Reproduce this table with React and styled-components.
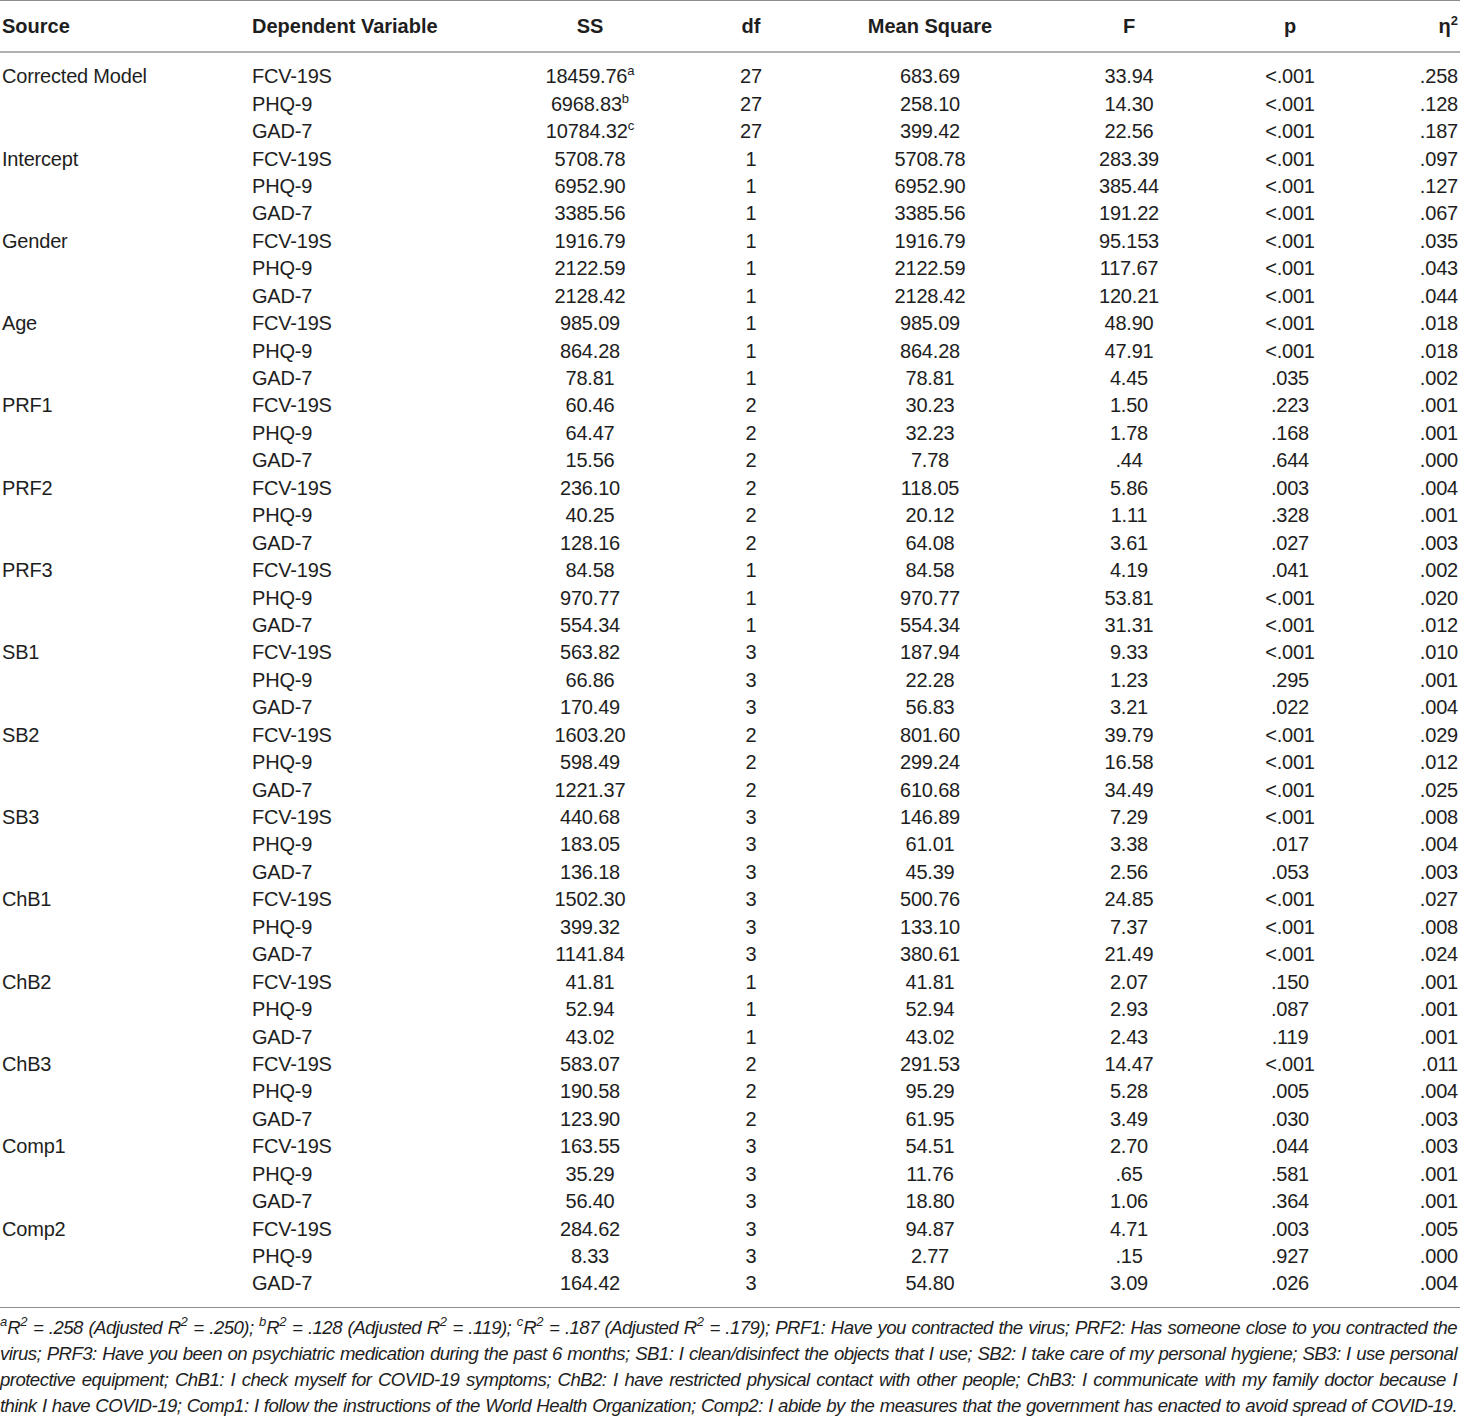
import React from 'react';
import styled, { createGlobalStyle } from 'styled-components';

const GlobalStyle = createGlobalStyle`
  html, body {
    margin: 0;
    padding: 0;
    background: #ffffff;
  }
  body {
    font-family: "Liberation Sans", Arial, sans-serif;
    color: #1e1e1e;
  }
`;

const COLUMNS = '250px 250px 180px 142px 216px 182px 140px 100px';

// Outer wrapper for the whole table
const TableWrap = styled.section`
  width: 1460px;
  border-top: 1px solid #8c8c8c;
`;

// Header row
const HeaderRow = styled.div`
  display: grid;
  grid-template-columns: ${COLUMNS};
  height: 50px;
  align-items: center;
  border-bottom: 2px solid #b0b0b0;
  font-weight: bold;
  font-size: 20px;
`;

// Cell used by both header and body rows
const Cell = styled.div`
  text-align: ${(p) => p.$align || 'center'};
  padding-left: ${(p) => (p.$align === 'left' ? '2px' : '0')};
  padding-right: ${(p) => (p.$align === 'right' ? '2px' : '0')};
  white-space: nowrap;
`;

const Body = styled.div`
  padding: 10px 0 9px;
  border-bottom: 1px solid #8c8c8c;
`;

const Row = styled.div`
  display: grid;
  grid-template-columns: ${COLUMNS};
  height: 27.45px;
  align-items: center;
  font-size: 20px;
  letter-spacing: -0.2px;
`;

const Sup = styled.sup`
  font-size: 13px;
  line-height: 0;
  vertical-align: 8px;
  letter-spacing: 0;
`;

const Footnote = styled.div`
  padding-top: 7px;
  font-style: italic;
  font-size: 18.6px;
  letter-spacing: -0.55px;
  line-height: 26px;
`;

const FootLine = styled.div`
  text-align: justify;
  text-align-last: justify;
  white-space: nowrap;
  padding-right: 3px;
`;

const groups = [
  ['Corrected Model', [
    ['FCV-19S', '18459.76', 'a', '27', '683.69', '33.94', '<.001', '.258'],
    ['PHQ-9', '6968.83', 'b', '27', '258.10', '14.30', '<.001', '.128'],
    ['GAD-7', '10784.32', 'c', '27', '399.42', '22.56', '<.001', '.187'],
  ]],
  ['Intercept', [
    ['FCV-19S', '5708.78', '', '1', '5708.78', '283.39', '<.001', '.097'],
    ['PHQ-9', '6952.90', '', '1', '6952.90', '385.44', '<.001', '.127'],
    ['GAD-7', '3385.56', '', '1', '3385.56', '191.22', '<.001', '.067'],
  ]],
  ['Gender', [
    ['FCV-19S', '1916.79', '', '1', '1916.79', '95.153', '<.001', '.035'],
    ['PHQ-9', '2122.59', '', '1', '2122.59', '117.67', '<.001', '.043'],
    ['GAD-7', '2128.42', '', '1', '2128.42', '120.21', '<.001', '.044'],
  ]],
  ['Age', [
    ['FCV-19S', '985.09', '', '1', '985.09', '48.90', '<.001', '.018'],
    ['PHQ-9', '864.28', '', '1', '864.28', '47.91', '<.001', '.018'],
    ['GAD-7', '78.81', '', '1', '78.81', '4.45', '.035', '.002'],
  ]],
  ['PRF1', [
    ['FCV-19S', '60.46', '', '2', '30.23', '1.50', '.223', '.001'],
    ['PHQ-9', '64.47', '', '2', '32.23', '1.78', '.168', '.001'],
    ['GAD-7', '15.56', '', '2', '7.78', '.44', '.644', '.000'],
  ]],
  ['PRF2', [
    ['FCV-19S', '236.10', '', '2', '118.05', '5.86', '.003', '.004'],
    ['PHQ-9', '40.25', '', '2', '20.12', '1.11', '.328', '.001'],
    ['GAD-7', '128.16', '', '2', '64.08', '3.61', '.027', '.003'],
  ]],
  ['PRF3', [
    ['FCV-19S', '84.58', '', '1', '84.58', '4.19', '.041', '.002'],
    ['PHQ-9', '970.77', '', '1', '970.77', '53.81', '<.001', '.020'],
    ['GAD-7', '554.34', '', '1', '554.34', '31.31', '<.001', '.012'],
  ]],
  ['SB1', [
    ['FCV-19S', '563.82', '', '3', '187.94', '9.33', '<.001', '.010'],
    ['PHQ-9', '66.86', '', '3', '22.28', '1.23', '.295', '.001'],
    ['GAD-7', '170.49', '', '3', '56.83', '3.21', '.022', '.004'],
  ]],
  ['SB2', [
    ['FCV-19S', '1603.20', '', '2', '801.60', '39.79', '<.001', '.029'],
    ['PHQ-9', '598.49', '', '2', '299.24', '16.58', '<.001', '.012'],
    ['GAD-7', '1221.37', '', '2', '610.68', '34.49', '<.001', '.025'],
  ]],
  ['SB3', [
    ['FCV-19S', '440.68', '', '3', '146.89', '7.29', '<.001', '.008'],
    ['PHQ-9', '183.05', '', '3', '61.01', '3.38', '.017', '.004'],
    ['GAD-7', '136.18', '', '3', '45.39', '2.56', '.053', '.003'],
  ]],
  ['ChB1', [
    ['FCV-19S', '1502.30', '', '3', '500.76', '24.85', '<.001', '.027'],
    ['PHQ-9', '399.32', '', '3', '133.10', '7.37', '<.001', '.008'],
    ['GAD-7', '1141.84', '', '3', '380.61', '21.49', '<.001', '.024'],
  ]],
  ['ChB2', [
    ['FCV-19S', '41.81', '', '1', '41.81', '2.07', '.150', '.001'],
    ['PHQ-9', '52.94', '', '1', '52.94', '2.93', '.087', '.001'],
    ['GAD-7', '43.02', '', '1', '43.02', '2.43', '.119', '.001'],
  ]],
  ['ChB3', [
    ['FCV-19S', '583.07', '', '2', '291.53', '14.47', '<.001', '.011'],
    ['PHQ-9', '190.58', '', '2', '95.29', '5.28', '.005', '.004'],
    ['GAD-7', '123.90', '', '2', '61.95', '3.49', '.030', '.003'],
  ]],
  ['Comp1', [
    ['FCV-19S', '163.55', '', '3', '54.51', '2.70', '.044', '.003'],
    ['PHQ-9', '35.29', '', '3', '11.76', '.65', '.581', '.001'],
    ['GAD-7', '56.40', '', '3', '18.80', '1.06', '.364', '.001'],
  ]],
  ['Comp2', [
    ['FCV-19S', '284.62', '', '3', '94.87', '4.71', '.003', '.005'],
    ['PHQ-9', '8.33', '', '3', '2.77', '.15', '.927', '.000'],
    ['GAD-7', '164.42', '', '3', '54.80', '3.09', '.026', '.004'],
  ]],
];

const R2 = () => (
  <>
    R<Sup>2</Sup>
  </>
);

const App = () => {
  return (
    <>
      <GlobalStyle />
      <TableWrap>
        <HeaderRow>
          <Cell $align="left">Source</Cell>
          <Cell $align="left">Dependent Variable</Cell>
          <Cell>SS</Cell>
          <Cell>df</Cell>
          <Cell>Mean Square</Cell>
          <Cell>F</Cell>
          <Cell>p</Cell>
          <Cell $align="right">
            η<Sup>2</Sup>
          </Cell>
        </HeaderRow>
        <Body>
          {groups.map(([source, rows]) =>
            rows.map((r, i) => (
              <Row key={source + r[0]}>
                <Cell $align="left">{i === 0 ? source : ''}</Cell>
                <Cell $align="left">{r[0]}</Cell>
                <Cell>
                  {r[1]}
                  {r[2] && <Sup>{r[2]}</Sup>}
                </Cell>
                <Cell>{r[3]}</Cell>
                <Cell>{r[4]}</Cell>
                <Cell>{r[5]}</Cell>
                <Cell>{r[6]}</Cell>
                <Cell $align="right">{r[7]}</Cell>
              </Row>
            ))
          )}
        </Body>
      </TableWrap>
      <Footnote>
        <FootLine>
          <Sup>a</Sup><R2 /> = .258 (Adjusted <R2 /> = .250); <Sup>b</Sup><R2 /> = .128 (Adjusted <R2 /> = .119); <Sup>c</Sup><R2 /> = .187 (Adjusted <R2 /> = .179); PRF1: Have you contracted the virus; PRF2: Has someone close to you contracted the
        </FootLine>
        <FootLine>
          virus; PRF3: Have you been on psychiatric medication during the past 6 months; SB1: I clean/disinfect the objects that I use; SB2: I take care of my personal hygiene; SB3: I use personal
        </FootLine>
        <FootLine>
          protective equipment; ChB1: I check myself for COVID-19 symptoms; ChB2: I have restricted physical contact with other people; ChB3: I communicate with my family doctor because I
        </FootLine>
        <FootLine>
          think I have COVID-19; Comp1: I follow the instructions of the World Health Organization; Comp2: I abide by the measures that the government has enacted to avoid spread of COVID-19.
        </FootLine>
      </Footnote>
    </>
  );
};

export default App;
